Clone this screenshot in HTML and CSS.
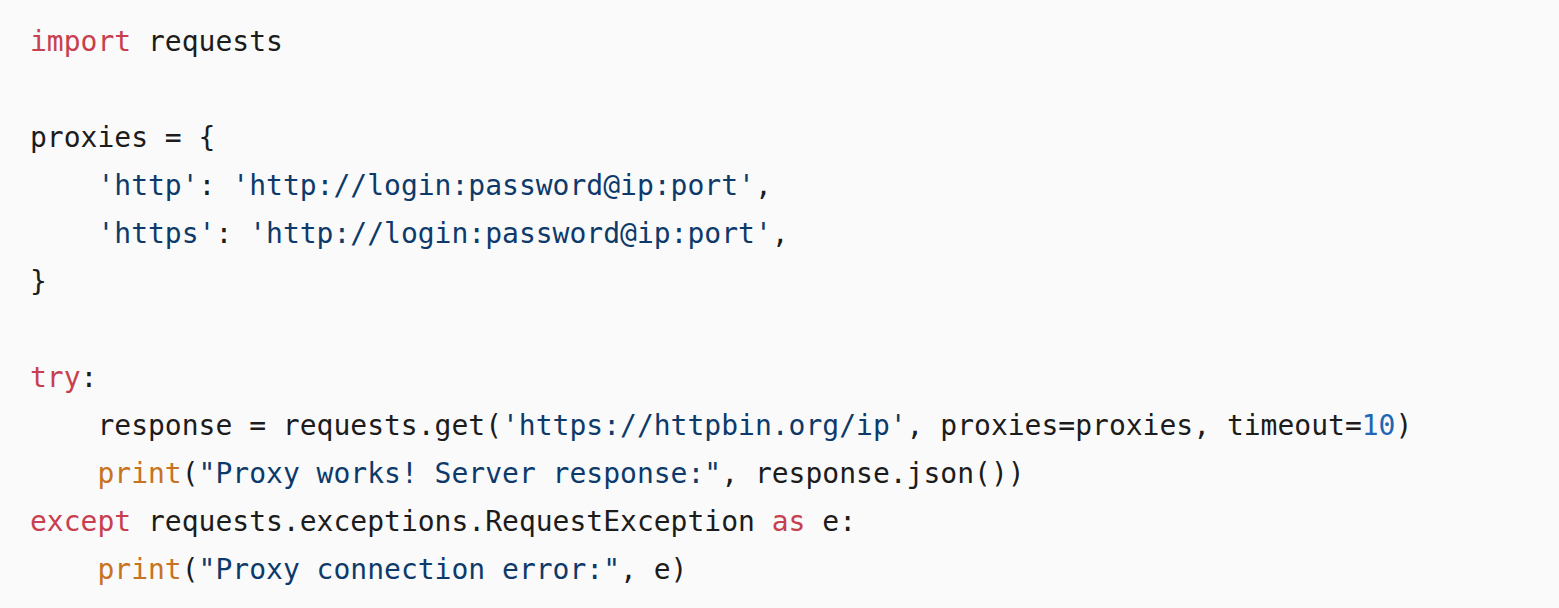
FILE: index.html
```html
<!DOCTYPE html>
<html>
<head>
<meta charset="utf-8">
<link rel="stylesheet" href="styles.css">
</head>
<body>
<pre class="code"><code class="code-body"><span class="kw">import</span> requests

proxies = {
    <span class="str">'http'</span>: <span class="str">'http://login:password@ip:port'</span>,
    <span class="str">'https'</span>: <span class="str">'http://login:password@ip:port'</span>,
}

<span class="kw">try</span>:
    response = requests.get(<span class="str">'https://httpbin.org/ip'</span>, proxies=proxies, timeout=<span class="num">10</span>)
    <span class="bi">print</span>(<span class="str">"Proxy works! Server response:"</span>, response.json())
<span class="kw">except</span> requests.exceptions.RequestException <span class="kw">as</span> e:
    <span class="bi">print</span>(<span class="str">"Proxy connection error:"</span>, e)</code></pre>
</body>
</html>
```
FILE: styles.css
```css
html, body {
  margin: 0;
  padding: 0;
  background: #fafafa;
}
.code {
  margin: 0;
  padding: 18px 30px 14px;
  font-family: "DejaVu Sans Mono", "Liberation Mono", monospace;
  font-size: 28px;
  line-height: 48px;
  color: #1c1c1c;
  background: #fafafa;
}
.code-body {
  font: inherit;
  line-height: inherit;
}
.kw { color: #c7404f; }
.str { color: #0d3a6b; }
.num { color: #1f66b3; }
.bi { color: #c7731f; }
```
